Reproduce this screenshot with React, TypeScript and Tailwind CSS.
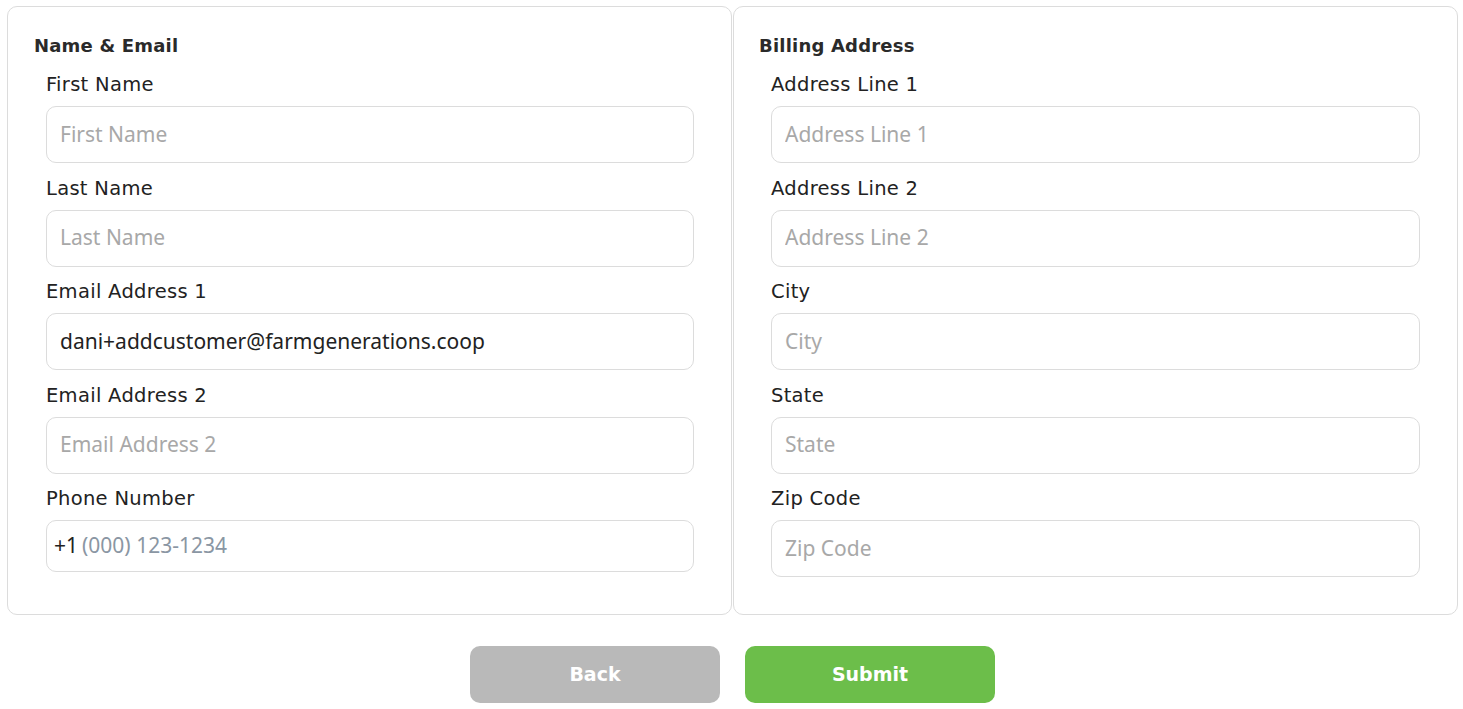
import React from "react";

const labelFont = { fontFamily: '"DejaVu Sans", "Noto Sans", sans-serif' };

type F = { label: string; placeholder: string; value?: string; phone?: boolean };

function Field({ label, placeholder, value, phone }: F) {
  return (
    <div className="flex flex-col">
      <div className="h-[24px] text-[19.5px] leading-[26px] tracking-[0.3px] text-[#222] whitespace-nowrap" style={labelFont}>{label}</div>
      <div
        className={`mt-[10px] flex items-center rounded-[10px] border border-[#dcdcdc] bg-white ${phone ? "h-[52px] pl-[7px] pr-[13px]" : "h-[57px] px-[13px]"}`}
      >
        {phone && <span className="mr-[4px] text-[21px] text-[#222] font-['Noto_Sans',sans-serif]">+1</span>}
        <input
          className={`w-full bg-transparent text-[21px] outline-none font-['Noto_Sans',sans-serif] text-[#222] ${phone ? "placeholder:text-[#8a96a3]" : "placeholder:text-[#a8a8a8]"}`}
          placeholder={placeholder}
          defaultValue={value}
        />
      </div>
    </div>
  );
}

function Card({ title, fields, right }: { title: string; fields: F[]; right?: boolean }) {
  return (
    <div className={`rounded-[10px] border border-[#dcdcdc] bg-white pt-[28px] pb-[37px] pr-[37px] ${right ? "pl-[37px]" : "pl-[38px]"}`}>
      <div className="-ml-[12px] h-[22px] text-[18px] leading-[22px] font-bold tracking-[0.2px] text-[#2a2a2a] whitespace-nowrap" style={labelFont}>{title}</div>
      <div className="mt-[15px] flex flex-col gap-[12.5px]">
        {fields.map((f) => (
          <Field key={f.label} {...f} />
        ))}
      </div>
    </div>
  );
}

export default function App() {
  return (
    <div className="min-h-screen bg-white pt-[6px]">
      <div className="ml-[7px] mr-[5px] grid grid-cols-2 gap-[1px]">
        <Card
          title="Name & Email"
          fields={[
            { label: "First Name", placeholder: "First Name" },
            { label: "Last Name", placeholder: "Last Name" },
            { label: "Email Address 1", placeholder: "Email Address 1", value: "dani+addcustomer@farmgenerations.coop" },
            { label: "Email Address 2", placeholder: "Email Address 2" },
            { label: "Phone Number", placeholder: "(000) 123-1234", phone: true },
          ]}
        />
        <Card
          right
          title="Billing Address"
          fields={[
            { label: "Address Line 1", placeholder: "Address Line 1" },
            { label: "Address Line 2", placeholder: "Address Line 2" },
            { label: "City", placeholder: "City" },
            { label: "State", placeholder: "State" },
            { label: "Zip Code", placeholder: "Zip Code" },
          ]}
        />
      </div>
      <div className="mt-[31px] flex justify-center gap-[25px] pl-[2px]">
        <button className="h-[57px] w-[250px] rounded-[10px] bg-[#b9b9b9] text-[19px] font-bold text-white" style={labelFont}>Back</button>
        <button className="h-[57px] w-[250px] rounded-[10px] bg-[#6cbe4a] text-[19px] font-bold text-white" style={labelFont}>Submit</button>
      </div>
    </div>
  );
}
